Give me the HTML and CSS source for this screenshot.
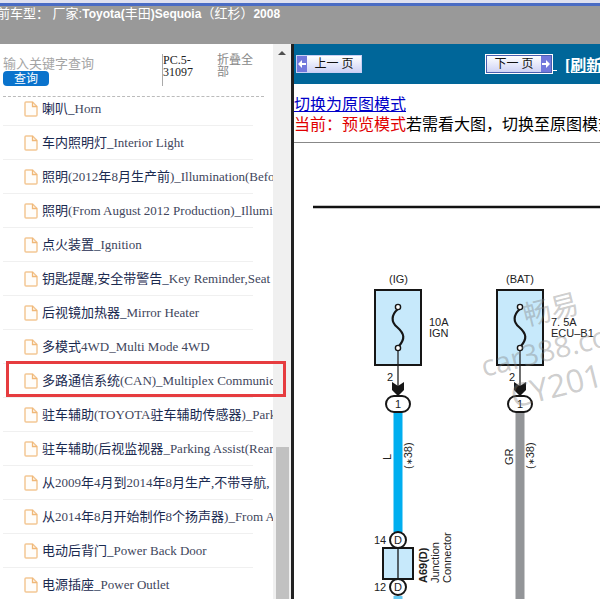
FILE: index.html
```html
<!DOCTYPE html>
<html lang="zh-CN">
<head>
<meta charset="utf-8">
<title>Toyota Sequoia 2008</title>
<link rel="stylesheet" href="styles.css">
</head>
<body>
<svg class="defs" aria-hidden="true">
  <symbol id="file" viewBox="0 0 14 16">
    <path d="M2 1h6.500L13 5.500V14q0 1-1 1H2q-1 0-1-1V2q0-1 1-1z" fill="#fffdfa" stroke="#f3c795" stroke-width="1.500"/>
    <path d="M8.500 1v4.500H13" fill="none" stroke="#f0b878" stroke-width="1.300"/>
  </symbol>
</svg>
<header class="topbar">
  <p class="model">当前车型： 厂家:<b>Toyota(</b>丰田<b>)Sequoia</b>（红杉）<b>2008</b></p>
</header>
<div class="frames">
  <aside class="sidebar">
    <div class="tree">
      <div class="tools">
        <form class="search">
          <input class="query" type="text" placeholder="输入关键字查询" aria-label="输入关键字查询">
          <button class="go" type="button">查询</button>
        </form>
        <div class="code">PC.5-31097</div>
        <a class="fold" href="#">折叠全部</a>
      </div>
      <ul class="list">
        <li><a href="#"><svg><use href="#file"/></svg>喇叭_<span>Horn</span></a></li>
        <li><a href="#"><svg><use href="#file"/></svg>车内照明灯_<span>Interior Light</span></a></li>
        <li><a href="#"><svg><use href="#file"/></svg>照明<span>(2012</span>年<span>8</span>月生产前<span>)_Illumination(Before</span></a></li>
        <li><a href="#"><svg><use href="#file"/></svg>照明<span>(From August 2012 Production)_Illumination</span></a></li>
        <li><a href="#"><svg><use href="#file"/></svg>点火装置_<span>Ignition</span></a></li>
        <li><a href="#"><svg><use href="#file"/></svg>钥匙提醒,安全带警告_<span>Key Reminder,Seat</span></a></li>
        <li><a href="#"><svg><use href="#file"/></svg>后视镜加热器_<span>Mirror Heater</span></a></li>
        <li><a href="#"><svg><use href="#file"/></svg>多模式<span>4WD_Multi Mode 4WD</span></a></li>
        <li class="marked"><a href="#"><svg><use href="#file"/></svg>多路通信系统<span>(CAN)_Multiplex Communication</span></a></li>
        <li><a href="#"><svg><use href="#file"/></svg>驻车辅助<span>(TOYOTA</span>驻车辅助传感器<span>)_Parking</span></a></li>
        <li><a href="#"><svg><use href="#file"/></svg>驻车辅助<span>(</span>后视监视器<span>_Parking Assist(Rear</span></a></li>
        <li><a href="#"><svg><use href="#file"/></svg>从<span>2009</span>年<span>4</span>月到<span>2014</span>年<span>8</span>月生产,不带导航,</a></li>
        <li><a href="#"><svg><use href="#file"/></svg>从<span>2014</span>年<span>8</span>月开始制作<span>8</span>个扬声器<span>)_From August</span></a></li>
        <li><a href="#"><svg><use href="#file"/></svg>电动后背门_<span>Power Back Door</span></a></li>
        <li><a href="#"><svg><use href="#file"/></svg>电源插座_<span>Power Outlet</span></a></li>
      </ul>
    </div>
    <div class="scroll"><i class="up"></i><i class="thumb"></i></div>
  </aside>
  <main class="viewer">
    <nav class="pager">
      <button class="page" type="button"><i class="tab"><svg viewBox="0 0 10 16"><path d="M1 8l4-4v3h4v2H5v3z" fill="#fff"/></svg></i><span>上一 页</span></button>
      <button class="page next" type="button"><span>下一 页</span><i class="tab"><svg viewBox="0 0 10 16"><path d="M9 8L5 4v3H1v2h4v3z" fill="#fff"/></svg></i></button>
      <a class="gap" href="#" aria-label="下一页">&nbsp;</a>
      <a class="refresh" href="#">[刷新]</a>
    </nav>
    <div class="mode">
      <a href="#">切换为原图模式</a>
      <p><em>当前：预览模式</em>若需看大图，切换至原图模式</p>
    </div>
    <svg class="diagram" viewBox="294 143 640 700" width="640" height="700">
      <defs>
        <g id="fuse">
          <rect x="-23" y="290" width="46" height="75" fill="#c7e9fb" stroke="#161616" stroke-width="2"/>
          <path d="M0 309C-7 315-7 322-1 327C7 334 7 339 1 346" fill="none" stroke="#161616" stroke-width="2.200"/>
          <path d="M0 350V386" stroke="#222" stroke-width="1.300"/>
          <circle cy="307" r="2.600" fill="#fff" stroke="#161616" stroke-width="1.400"/>
          <circle cy="348" r="2.600" fill="#fff" stroke="#161616" stroke-width="1.400"/>
          <path d="M-6 382L0 386L6 382V390L0 396L-6 390z" fill="#161616"/>
        </g>
        <rect id="terminal" x="-12" y="396" width="24" height="16" rx="8" fill="#fff" stroke="#161616" stroke-width="2"/>
      </defs>
      <path d="M313 207H934" stroke="#111" stroke-width="2.500"/>
      <path d="M398 413V532" stroke="#00aeef" stroke-width="9"/>
      <path d="M398 596V843" stroke="#63c8f3" stroke-width="9"/>
      <path d="M520 413V843" stroke="#939598" stroke-width="9"/>
      <use href="#fuse" x="398"/>
      <use href="#fuse" x="520"/>
      <use href="#terminal" x="398"/>
      <use href="#terminal" x="520"/>
      <rect x="383" y="548" width="30" height="31" fill="#c7e9fb" stroke="#161616" stroke-width="2"/>
      <path d="M398 548V579" stroke="#161616" stroke-width="1.300"/>
      <circle cx="398" cy="540" r="8" fill="#fff" stroke="#161616" stroke-width="2"/>
      <circle cx="398" cy="587" r="8" fill="#fff" stroke="#161616" stroke-width="2"/>
      <g class="label">
        <text x="389" y="283">(IG)</text>
        <text x="506" y="283">(BAT)</text>
        <text x="429" y="326">10A</text>
        <text x="429" y="337">IGN</text>
        <text x="551" y="326">7. 5A</text>
        <text x="551" y="337">ECU–B1</text>
        <text x="387" y="381">2</text>
        <text x="509" y="381">2</text>
        <text x="395" y="408">1</text>
        <text x="517" y="408">1</text>
        <text x="374" y="544">14</text>
        <text x="374" y="591">12</text>
        <text x="394" y="544">D</text>
        <text x="394" y="591">D</text>
        <text transform="translate(391 460) rotate(-90)">L</text>
        <text transform="translate(412 469) rotate(-90)">(<tspan class="star">∗</tspan>38)</text>
        <text transform="translate(513 465) rotate(-90)">GR</text>
        <text transform="translate(534 469) rotate(-90)">(<tspan class="star">∗</tspan>38)</text>
        <text class="strong" transform="translate(427 583) rotate(-90)">A69(D)</text>
        <text transform="translate(439 583) rotate(-90)">Junction</text>
        <text transform="translate(451 583) rotate(-90)">Connector</text>
      </g>
      <g class="mark">
        <text class="cn" transform="translate(526 326) rotate(-14)">畅易</text>
        <text class="site" transform="translate(484 377) rotate(-14)">car388.com</text>
        <text class="year" transform="translate(514 408) rotate(-14)">CY2016</text>
      </g>
    </svg>
  </main>
</div>
</body>
</html>
```
FILE: styles.css
```css
* { box-sizing: border-box; }

body {
  margin: 0;
  height: 100vh;
  display: flex;
  flex-direction: column;
  overflow: hidden;
  background: #fff;
  font-family: "Liberation Serif", "Noto Sans CJK SC", serif;
}

p, ul { margin: 0; padding: 0; list-style: none; }
button, input { font-family: inherit; margin: 0; padding: 0; border: 0; }
.defs { display: none; }

.topbar {
  flex: none;
  height: 44px;
  border-top: 3px solid #dfe1f0;
  background: linear-gradient(#4a6cc4 3px, #999 3px);
}
.model {
  margin-left: -16px;
  padding-top: 3px;
  color: #fff;
  font: 13px/16px "Liberation Sans", "Noto Sans CJK SC", sans-serif;
  white-space: pre;
}
.model b { font-size: 12px; }

.frames { flex: 1; min-height: 0; display: flex; }

.sidebar {
  flex: none;
  width: 294px;
  display: flex;
  border-right: 3px solid #222;
}
.tree { flex: 1; min-width: 0; padding-left: 3px; }
.tools {
  display: flex;
  height: 53px;
  margin-right: 9px;
  padding-top: 10px;
  border-bottom: 1px dashed #bbb;
  font-size: 12px;
  line-height: 12px;
}
.search { width: 159px; display: flex; flex-direction: column; align-items: flex-start; }
.query {
  width: 100%;
  height: 20px;
  margin-bottom: -3px;
  background: none;
  font-size: 13px;
}
.query::placeholder { color: #a5a5a5; }
.go {
  width: 46px;
  height: 15px;
  border-radius: 4px;
  background: #0a73cc;
  color: #fff;
  font-size: 12px;
  line-height: 14px;
}
.code { width: 55px; height: 32px; padding-right: 16px; border-left: 1px solid #aaa; color: #222; }
.fold { width: 38px; color: #888; text-decoration: none; }

.list li { position: relative; width: 250px; height: 34px; border-bottom: 1px solid #f0f0f0; }
.list li:first-child { height: 29px; }
.list a {
  display: flex;
  align-items: center;
  height: 100%;
  margin-right: -20px;
  padding-left: 21px;
  overflow: hidden;
  white-space: pre;
  color: #1a2a50;
  font-size: 13px;
  line-height: 20px;
  text-decoration: none;
}
.list li:first-child a { padding-bottom: 4px; }
.list span { color: #41465c; }
.list svg { flex: none; width: 14px; height: 16px; margin-right: 4px; }
.marked::after {
  content: "";
  position: absolute;
  inset: -3px -33px 0 3px;
  border: 3px solid #e63c3f;
}

.scroll { flex: none; width: 18px; display: flex; flex-direction: column; align-items: center; background: #f0f0f0; }
.up { margin-top: 7px; border: 4px solid transparent; border-top: 0; border-bottom-color: #505050; }
.thumb { width: 13px; height: 152px; margin-top: auto; background: #c1c1c1; }

.viewer { flex: 1; min-width: 0; overflow: hidden; }
.pager {
  display: flex;
  align-items: center;
  height: 40px;
  padding-left: 2px;
  background: #069;
  color: #fff;
  white-space: nowrap;
}
.page {
  flex: none;
  display: flex;
  align-items: center;
  width: 66px;
  height: 18px;
  border: 1px solid #c9cff5;
  background: linear-gradient(#fff, #cfd3f6);
  color: #111;
  font-size: 12px;
  line-height: 14px;
}
.page span { flex: 1; }
.tab { width: 10px; height: 16px; background: #7278dc; }
.tab svg { display: block; }
.next { margin-left: 124px; outline: 1px solid #fff; border-color: #4a5eb0; }
.gap { margin-left: 1px; color: #fff; font-size: 16px; }
.refresh { margin-left: 8px; color: #fff; font-size: 16px; font-weight: bold; }

.mode {
  padding: 11px 0 7px;
  border-bottom: 1px solid #888;
  color: #000;
  font-size: 16px;
  line-height: 20px;
  white-space: nowrap;
}
.mode a { display: block; color: #0000c8; }
.mode em { color: #e00000; font-style: normal; }

.diagram { display: block; }
.label { fill: #222; font-family: "Liberation Sans", sans-serif; font-size: 11px; }
.star { font-size: 8px; }
.strong { font-weight: bold; }
.mark { fill: #808080; fill-opacity: 0.4; font-family: "Open Sans", "Noto Sans CJK SC", sans-serif; }
.cn { font-size: 28px; }
.site { font-size: 29px; }
.year { font-size: 32px; }
```
